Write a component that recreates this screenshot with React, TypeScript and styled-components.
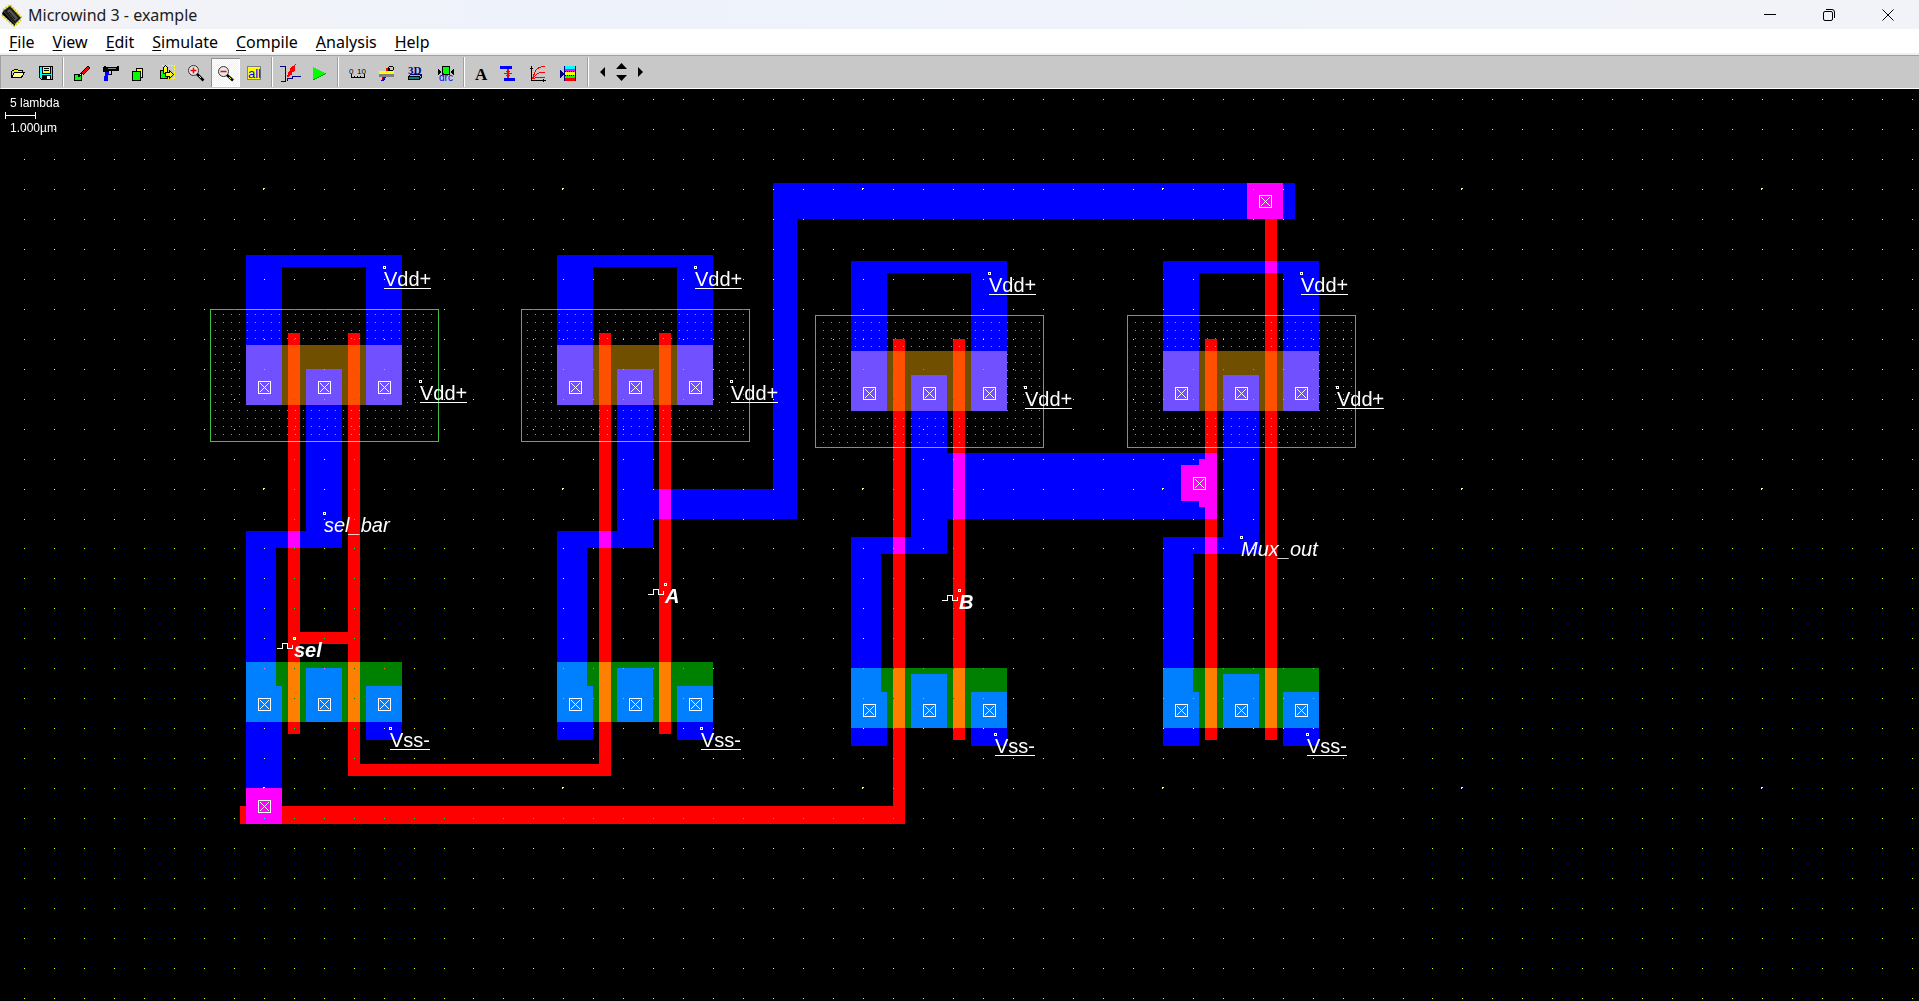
import React from "react";
import styled, { createGlobalStyle, css } from "styled-components";

const GlobalStyle = createGlobalStyle`
  * { box-sizing: border-box; }
  html, body { margin: 0; height: 100%; background: #000; }
  button { font: inherit; color: inherit; border: 0; margin: 0; padding: 0; background: none; }
`;

/* ---------- window chrome ---------- */

const Window = styled.div`
  display: flex;
  flex-direction: column;
  height: 100vh;
  overflow: hidden;
  font-family: "Noto Sans", "Open Sans", sans-serif;
  color: #000;
`;

const TitleBar = styled.header`
  display: flex;
  align-items: center;
  height: 29px;
  flex: none;
  padding-left: 2px;
  background: linear-gradient(90deg, #f3f3f6 0%, #eef2fb 30%, #f0f3fa 70%, #f2f3f8 100%);
`;

const Title = styled.h1`
  margin: 0;
  padding-left: 6px;
  flex: 1;
  font-size: 16px;
  line-height: 24px;
  font-weight: 400;
  color: #1b1b1b;
`;

const WindowButton = styled.button`
  display: flex;
  align-items: center;
  justify-content: center;
  width: 59px;
  height: 29px;
`;

const WindowButtons = styled.div`
  display: flex;
  padding-right: 2px;
`;

const MenuBar = styled.nav`
  display: flex;
  flex: none;
  height: 26px;
  padding: 2px 0 0;
  background: #fff;
  border-bottom: 2px solid #f0f0f0;
`;

const MenuItem = styled.button`
  height: 22px;
  padding: 0 9px;
  font-size: 16px;
  line-height: 22px;

  u { text-underline-offset: 2px; text-decoration-thickness: 1px; }
`;

const ToolBar = styled.div`
  display: flex;
  align-items: flex-start;
  flex: none;
  height: 34px;
  padding-top: 1px;
  background: #c8c8c8;
  border-top: 1px solid #a0a0a0;
  border-bottom: 1px solid #fff;
  border-left: 1px solid #a0a0a0;
`;

const ToolGroup = styled.div<{ $before: number; $after: number }>`
  display: flex;
  align-items: center;
  height: 30px;
  padding: 0 ${(p) => p.$after}px 0 ${(p) => p.$before}px;

  & + & {
    border-left: 1px solid #a0a0a0;
    box-shadow: inset 1px 0 #fff;
  }
`;

const ToolButton = styled.button<{ $active?: boolean }>`
  display: flex;
  align-items: center;
  justify-content: center;
  width: 29px;
  height: 29px;
  ${(p) =>
    p.$active &&
    css`
      background: repeating-conic-gradient(#fff 0 25%, #f0f0f0 0 50%) 0 0 / 2px 2px;
      box-shadow: inset 1px 1px #909090, inset -1px -1px #fff;
    `}
`;

const Icon = styled.svg.attrs({ width: 23, height: 23, viewBox: "0 0 23 23", "aria-hidden": true })`
  display: block;
  flex: none;
  shape-rendering: crispEdges;
`;

const PanPad = styled.div`
  display: grid;
  grid-template-columns: 5px 11px 5px;
  grid-template-rows: 9px 9px;
  column-gap: 11px;
  row-gap: 3px;
  align-items: center;
  margin-left: 7px;
`;

const PanButton = styled.button<{ $area: string }>`
  display: flex;
  align-items: center;
  justify-content: center;
  grid-area: ${(p) => p.$area};
`;

const Glyph = styled.svg`
  display: block;
  flex: none;
  overflow: visible;
`;

/* ---------- toolbar icons ---------- */

const icons: Record<string, React.ReactNode> = {
  open: (
    <>
      <path d="M5.5 9.5h2l1 -1h3l1 1h4v2M5.5 9.5v7h10l3 -5h-10l-3 5" fill="#ff0" stroke="#000" />
      <path d="M9 12h8.500l-2.500 4h-8z" fill="#ff9" />
    </>
  ),
  save: (
    <>
      <path d="M4.500 5.500h13v13h-11l-2 -2z" fill="#0ff" stroke="#000" />
      <path d="M8 6h7v6H8z" fill="#ff0" />
      <path d="M7.500 5.500v6.500h8v-6.500M9 7.500h5M9 9.500h5" fill="none" stroke="#000" />
      <path d="M7 14h9v5H7z" fill="#000" />
      <path d="M12 15h3v3h-3z" fill="#fff" />
    </>
  ),
  draw: (
    <>
      <path d="M5.500 13.500h7v6h-7z" fill="#0f0" stroke="#000" />
      <path d="M9 16l3-4 1 2z" fill="#fff" stroke="#000" />
      <path d="M13 13L20 6" stroke="#000" strokeWidth="3.500" />
      <path d="M13.500 12.500L19.500 6.500" stroke="#f00" strokeWidth="2" />
    </>
  ),
  gun: (
    <>
      <path d="M5 6h1v-1h2v1h11v-1h2v5h-10v1h-6z" fill="#000" />
      <path d="M13 10v3h-3" fill="none" stroke="#000" />
      <path d="M7 11h4v3h-1v6h-4v-5h1z" fill="#00f" />
      <path d="M10 7.500h8" stroke="#888" />
    </>
  ),
  copy: (
    <>
      <path d="M9.500 7.500h6v9h-6z" fill="#ff0" stroke="#000" />
      <path d="M5.500 10.500h8v9h-8z" fill="#0f0" stroke="#000" />
    </>
  ),
  move: (
    <>
      <path d="M5.500 4.500h13v13" fill="none" stroke="#ff0" strokeDasharray="2 1" />
      <path d="M5 17.500h14" stroke="#ff0" strokeDasharray="2 1" />
      <path d="M4.500 9.500h7v8h-7z" fill="#0f0" stroke="#000" />
      <path d="M7.500 12.500v-6l2-2 2 2v6z" fill="#ff0" stroke="#000" />
      <path d="M9.500 11.500h4v-2l4 4 -4 4v-2h-4z" fill="#ff0" stroke="#000" />
    </>
  ),
  zoomIn: (
    <g shapeRendering="auto">
      <circle cx="8.500" cy="9.500" r="5" fill="#e8e8e8" stroke="#333" />
      <path d="M5.500 9.500h6M8.500 6.500v6" stroke="#f00" strokeWidth="1.500" />
      <path d="M12 13l6.500 6.500" stroke="#000" strokeWidth="2.500" />
      <path d="M14 15l2 2" stroke="#ff0" />
    </g>
  ),
  zoomOut: (
    <g shapeRendering="auto">
      <circle cx="9.500" cy="10.500" r="5" fill="#e8e8e8" stroke="#333" />
      <path d="M6.500 10.500h6" stroke="#f00" strokeWidth="1.500" />
      <path d="M13 14l6 5.500" stroke="#000" strokeWidth="2.500" />
      <path d="M15 16l2 2" stroke="#ff0" />
    </g>
  ),
  all: (
    <>
      <path d="M4.500 5.500h13v13h-13z" fill="#ff0" stroke="#808080" />
      <text x="5" y="17" fontSize="13" fontFamily="Liberation Sans, sans-serif" fill="#00f">all</text>
    </>
  ),
  simulate: (
    <>
      <path d="M2 5.500h5.500v14.500h-5M9 20v-2.500h5v-2h9" fill="none" stroke="#000080" />
      <path d="M17 4l-5 4 1 1-3 3 1 1-2 3 5-3-1-1 4-3-1-1z" fill="#f00" stroke="#f00" />
    </>
  ),
  run: (
    <>
      <path d="M6 6l13 6.500L6 19z" fill="#0f0" />
      <path d="M19 12.500L6 19" stroke="#00a000" />
    </>
  ),
  ruler: (
    <>
      <text x="3" y="13" fontSize="8" fontFamily="Liberation Sans, sans-serif" fill="#000">0</text>
      <text x="11" y="13" fontSize="8" fontFamily="Liberation Sans, sans-serif" fill="#000">10</text>
      <path d="M5.500 13v3.500h13v-3.500M8.500 15v2M11.500 15v2M14.500 15v2" fill="none" stroke="#000" />
    </>
  ),
  section: (
    <>
      <circle cx="16" cy="7.500" r="2.500" fill="#c8c8c8" stroke="#000" />
      <path d="M14.500 7.500L8 19" stroke="#000" strokeWidth="2.500" />
      <path d="M12 7v3" stroke="#f00" strokeWidth="2" />
      <path d="M4 10h15v3H4z" fill="#ff0" />
      <path d="M4 13h15v3H4z" fill="#808080" />
      <path d="M10 16l-3 4" stroke="#00f" strokeWidth="2" />
      <path d="M8 16l-1 2" stroke="#f00" />
    </>
  ),
  view3d: (
    <>
      <text x="4" y="13" fontSize="11" fontWeight="700" fontFamily="Liberation Serif, serif" fill="#000080">3D</text>
      <path d="M4.500 15.500l2-2h11l-2 2z" fill="#0ff" stroke="#000080" />
      <path d="M4.500 15.500h11v3h-11zM15.500 18.500l2-2v-3" fill="#008080" stroke="#000" />
    </>
  ),
  drc: (
    <>
      <path d="M9.500 5.500h7v8h-7z" fill="#0f0" stroke="#000" />
      <path d="M5 8v6l4-3zM21 8v6l-4-3z" fill="#000" />
      <text x="6" y="20" fontSize="10" fontFamily="Liberation Sans, sans-serif" fill="#00f">drc</text>
    </>
  ),
  text: (
    <text x="5" y="19" fontSize="17" fontWeight="700" fontFamily="Liberation Serif, serif" fill="#000">A</text>
  ),
  mos: (
    <>
      <path d="M1 5h12v3H1zM5 17h11v3H5z" fill="#00f" />
      <path d="M9 8v9" stroke="#f00" strokeWidth="2" />
      <path d="M7 10.500h4M5 12.500h8M7 14.500h4" stroke="#f00" />
    </>
  ),
  curves: (
    <>
      <path d="M3.500 5v14.500h14M2 7.500h3M15.500 18v3" fill="none" stroke="#000" />
      <path d="M4 18L8 9q2-3 9-3.500M4 18l5-5q2-2 8-2M4 18l6-2h7" fill="none" stroke="#f00" />
    </>
  ),
  layers: (
    <>
      <path d="M8 5h10v3H8z" fill="#0ff" />
      <path d="M8 8h10v3H8z" fill="#f0f" />
      <path d="M8 11h10v3H8z" fill="#ff0" />
      <path d="M8 14h10v3H8z" fill="#0f0" />
      <path d="M8 17h10v3H8z" fill="#f00" />
      <path d="M8 10.500h10M8 14.500h10" stroke="#000" strokeDasharray="1 1" />
      <path d="M7.500 5v15M18.500 5v15" stroke="#000080" />
      <path d="M3 9v8l4-4z" fill="#000080" />
    </>
  ),
};

type Tool = { id: string; label: string };
type Group = { before: number; after: number; tools: Tool[] };

const toolGroups: Group[] = [
  { before: 2, after: 1, tools: [{ id: "open", label: "Open" }, { id: "save", label: "Save" }] },
  {
    before: 3,
    after: 2,
    tools: [
      { id: "draw", label: "Draw box" },
      { id: "gun", label: "Delete" },
      { id: "copy", label: "Copy" },
      { id: "move", label: "Move" },
      { id: "zoomIn", label: "Zoom in" },
      { id: "zoomOut", label: "Zoom out" },
      { id: "all", label: "View all" },
    ],
  },
  { before: 3, after: 4, tools: [{ id: "simulate", label: "Extract" }, { id: "run", label: "Run simulation" }] },
  {
    before: 5,
    after: 4,
    tools: [
      { id: "ruler", label: "Measure" },
      { id: "section", label: "Cross-section" },
      { id: "view3d", label: "Process in 3D" },
      { id: "drc", label: "Design rule checker" },
    ],
  },
  {
    before: 3,
    after: 4,
    tools: [
      { id: "text", label: "Add text" },
      { id: "mos", label: "Connect layers" },
      { id: "curves", label: "MOS characteristics" },
      { id: "layers", label: "Palette" },
    ],
  },
];

const menus = ["File", "View", "Edit", "Simulate", "Compile", "Analysis", "Help"];

/* ---------- layout drawing ---------- */

const Canvas = styled.svg`
  display: block;
  flex: 1;
  width: 100%;
  min-height: 0;
  background: #000;
  isolation: isolate;
  shape-rendering: crispEdges;
`;

/* Layers add up where they cross, like the phosphor colours of the editor. */
const Layer = styled.path<{ $color: string }>`
  fill: ${(p) => p.$color};
  mix-blend-mode: lighten;
`;

const XorDots = styled.path<{ $color: string }>`
  fill: ${(p) => p.$color};
  mix-blend-mode: difference;
`;

const WellOutline = styled.rect`
  fill: none;
  stroke: #40c040;
  mix-blend-mode: lighten;
`;

const White = styled.path`
  fill: none;
  stroke: #fff;
`;

const Label = styled.text<{ $italic?: boolean; $bold?: boolean }>`
  font-family: "Liberation Sans", Arial, sans-serif;
  font-size: 20px;
  font-style: ${(p) => (p.$italic ? "italic" : "normal")};
  font-weight: ${(p) => (p.$bold ? 700 : 400)};
  fill: #fff;
`;

const ScaleText = styled.text`
  font-family: "Liberation Sans", Arial, sans-serif;
  font-size: 12px;
  fill: #fff;
`;

const box = (x: number, y: number, w: number, h: number) => `M${x} ${y}h${w}v${h}h${-w}z`;
const dot = (x: number, y: number) => box(x, y, 1, 1);

const cells = [
  { x: 246, y: 166 },
  { x: 557, y: 166 },
  { x: 851, y: 172 },
  { x: 1163, y: 172 },
];

const perCell = (draw: (x: number, y: number) => string) => cells.map((c) => draw(c.x, c.y)).join("");

const metal =
  perCell(
    (x, y) =>
      box(x, y, 156, 12) +
      box(x, y, 36, 150) +
      box(x + 120, y, 36, 150) +
      box(x + 60, y + 114, 36, 179) +
      box(x, y + 276, 96, 17) +
      box(x, y + 276, 30, 155) +
      box(x, y + 431, 36, 54) +
      box(x + 60, y + 413, 36, 54) +
      box(x + 120, y + 431, 36, 54)
  ) +
  box(246, 651, 36, 48) +
  box(653, 400, 144, 30) +
  box(773, 94, 24, 336) +
  box(773, 94, 522, 36) +
  box(947, 364, 270, 66);

const poly =
  perCell((x, y) => box(x + 42, y + 78, 12, 401) + box(x + 102, y + 78, 12, 401)) +
  box(300, 543, 48, 12) +
  box(348, 645, 12, 42) +
  box(348, 675, 263, 12) +
  box(599, 645, 12, 42) +
  box(240, 717, 665, 18) +
  box(893, 651, 12, 84) +
  box(1265, 130, 12, 120);

const pads =
  box(246, 699, 36, 36) + box(1247, 94, 36, 36) + box(1181, 376, 36, 36) + box(1199, 370, 18, 48);

const pdiff = perCell((x, y) => box(x, y + 90, 156, 60));
const ndiff = perCell((x, y) => box(x, y + 407, 156, 60));

const contact = (x: number, y: number) =>
  `M${x + 0.5} ${y + 0.5}h12v12h-12zM${x + 2} ${y + 2}l9 9M${x + 11} ${y + 2}l-9 9`;

const contacts =
  perCell((x, y) => [12, 72, 132].map((dx) => contact(x + dx, y + 126) + contact(x + dx, y + 443)).join("")) +
  contact(258, 711) +
  contact(1259, 106) +
  contact(1193, 388);

/* The 5-lambda grid is rounded to whole pixels, so a step is now and then one short. */
const gridX = Array.from({ length: 64 }, (_, i) => 24 + 30 * i - (i > 14 ? 1 : 0) - (i > 46 ? 1 : 0));
const gridY = Array.from({ length: 40 }, (_, i) => 10 + 30 * i - (i > 14 ? 1 : 0));
const gridDots = gridX.map((x) => gridY.map((y) => dot(x, y)).join("")).join("");
const majorDots = gridX
  .filter((_, i) => i % 10 === 8)
  .map((x) => gridY.filter((_, i) => i % 10 === 3).map((y) => box(x - 1, y - 1, 2, 2)).join(""))
  .join("");

const wellDots = cells
  .map((c) => {
    let d = "";
    for (let x = 207; x < c.x + 189; x += 8) {
      if (x <= c.x - 36) continue;
      for (let y = 225; y < c.y + 184; y += 8) {
        if (y > c.y + 54) d += dot(x, y);
      }
    }
    return d;
  })
  .join("");

type Pin = { text: string; x: number; y: number; underline?: number; italic?: boolean; clock?: boolean };

const pins: Pin[] = [
  ...cells.flatMap(({ x, y }) => [
    { text: "Vdd+", x: x + 138, y: y + 31, underline: 47 },
    { text: "Vdd+", x: x + 174, y: y + 145, underline: 47 },
    { text: "Vss-", x: x + 144, y: y + 492, underline: 40 },
  ]),
  { text: "sel_bar", x: 324, y: 443, italic: true },
  { text: "Mux_out", x: 1241, y: 467, italic: true },
  { text: "sel", x: 294, y: 568, italic: true, clock: true },
  { text: "A", x: 665, y: 514, italic: true, clock: true },
  { text: "B", x: 959, y: 520, italic: true, clock: true },
];

function PinLabel({ text, x, y, underline, italic, clock }: Pin) {
  return (
    <g>
      <White d={`M${x - 0.5} ${y - 19.5}h2v2h-2z`} />
      <Label x={x} y={y} $italic={italic} $bold={clock}>{text}</Label>
      {underline && <White d={`M${x} ${y + 2.5}h${underline}`} />}
      {clock && <White d={`M${x - 17} ${y - 8.5}h5.500v-5h5v5h5v-4`} />}
    </g>
  );
}

function ChipLayout() {
  return (
    <Canvas role="img" aria-label="Mask layout of the multiplexer">
      <rect width="100%" height="100%" fill="#000" />
      <Layer $color="#0000ff" d={metal} />
      <Layer $color="#705000" d={pdiff} />
      <Layer $color="#008000" d={ndiff} />
      <Layer $color="#ff0000" d={poly} />
      <Layer $color="#ff00ff" d={pads} />
      <XorDots $color="#40c040" d={wellDots} />
      {cells.map((c) => (
        <WellOutline key={c.x} x={c.x - 35.5} y={c.y + 54.5} width={228} height={132} />
      ))}
      <XorDots $color="#ffff80" d={majorDots} />
      <XorDots $color="#ffff00" d={gridDots} />
      <White d={contacts} />
      {pins.map((p) => (
        <PinLabel key={`${p.text}${p.x}`} {...p} />
      ))}
      <ScaleText x="10" y="18">5 lambda</ScaleText>
      <White d="M5.500 23v7M35.500 23v7M5 26.500h31" />
      <ScaleText x="10" y="43">1.000µm</ScaleText>
    </Canvas>
  );
}

/* ---------- application ---------- */

export default function App() {
  return (
    <Window>
      <GlobalStyle />
      <TitleBar>
        <Glyph width="20" height="22" viewBox="0 0 20 22" aria-hidden="true">
          <path d="M1 6l7-5 12 13" fill="none" stroke="#d8d000" strokeWidth="2" strokeDasharray="2 1" />
          <path d="M0 11l12 11 7-6" fill="none" stroke="#d8d000" strokeWidth="2" strokeDasharray="2 1" />
          <path d="M1 7L8 2l11 12-6 6z" fill="#1c1c1c" />
          <path d="M5 7l3-2 8 9-3 3z" fill="#555" />
          <path d="M7 8l6 7" stroke="#111" />
          <path d="M1 7l12 13v2L0 10z" fill="#000" />
        </Glyph>
        <Title>Microwind 3 - example</Title>
        <WindowButtons>
          <WindowButton aria-label="Minimize">
            <Glyph width="12" height="12" viewBox="0 0 12 12"><path d="M0 5.500h12" stroke="#000" /></Glyph>
          </WindowButton>
          <WindowButton aria-label="Restore">
            <Glyph width="12" height="12" viewBox="0 0 12 12" fill="none" stroke="#000">
              <rect x="0.500" y="2.500" width="9" height="9" rx="1.500" />
              <path d="M3 0.500h6a2.500 2.500 0 0 1 2.500 2.500v6" />
            </Glyph>
          </WindowButton>
          <WindowButton aria-label="Close">
            <Glyph width="12" height="12" viewBox="0 0 12 12"><path d="M0.500 0.500l11 11M11.500 0.500l-11 11" stroke="#000" /></Glyph>
          </WindowButton>
        </WindowButtons>
      </TitleBar>
      <MenuBar>
        {menus.map((m) => (
          <MenuItem key={m}><u>{m[0]}</u>{m.slice(1)}</MenuItem>
        ))}
      </MenuBar>
      <ToolBar role="toolbar">
        {toolGroups.map((g, i) => (
          <ToolGroup key={i} $before={g.before} $after={g.after}>
            {g.tools.map((t) => (
              <ToolButton key={t.id} aria-label={t.label} $active={t.id === "zoomOut"}>
                <Icon>{icons[t.id]}</Icon>
              </ToolButton>
            ))}
          </ToolGroup>
        ))}
        <ToolGroup $before={5} $after={4}>
          <PanPad>
            <PanButton $area="1 / 1 / 3 / 2" aria-label="Pan left">
              <Glyph width="5" height="10"><path d="M5 0v10L0 5z" /></Glyph>
            </PanButton>
            <PanButton $area="1 / 2" aria-label="Pan up">
              <Glyph width="11" height="6"><path d="M0 6h11L5.500 0z" /></Glyph>
            </PanButton>
            <PanButton $area="1 / 3 / 3 / 4" aria-label="Pan right">
              <Glyph width="5" height="10"><path d="M0 0v10l5-5z" /></Glyph>
            </PanButton>
            <PanButton $area="2 / 2" aria-label="Pan down">
              <Glyph width="11" height="6"><path d="M0 0h11L5.500 6z" /></Glyph>
            </PanButton>
          </PanPad>
        </ToolGroup>
      </ToolBar>
      <ChipLayout />
    </Window>
  );
}
